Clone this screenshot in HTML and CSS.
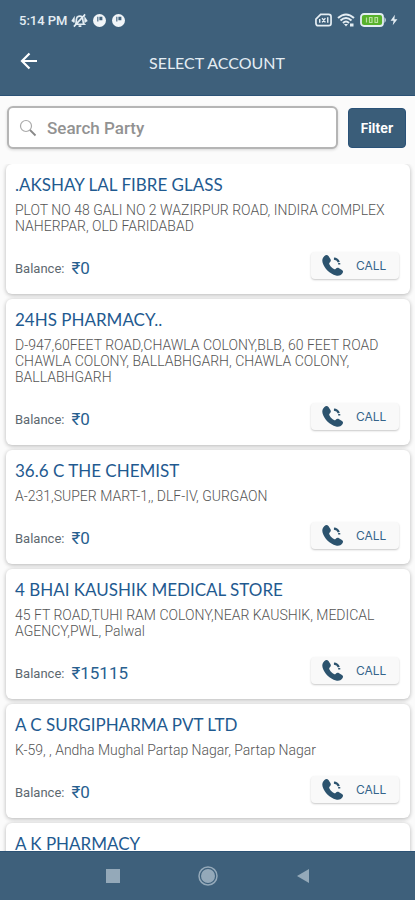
FILE: index.html
```html
<!DOCTYPE html>
<html lang="en">
<head>
<meta charset="utf-8">
<meta name="viewport" content="width=device-width, initial-scale=1">
<title>Select Account</title>
<link rel="stylesheet" href="styles.css">
</head>
<body>
<svg class="defs" aria-hidden="true">
  <symbol id="phone" viewBox="0 0 24 24">
    <path d="M3.600 2.200C5 .7 6.700.7 7.800 2.200L9.800 5.200C10.700 6.600 10.300 7.800 8.900 9.100C8.300 9.700 8.500 10.300 9 11.200C10.200 13.300 11.600 14.700 13.500 15.700C14.300 16.100 14.800 16 15.400 15.300C16.500 14.100 17.600 14 18.900 14.800L21.900 16.800C23.300 17.800 23.300 19.100 22.200 20.400C20.500 22.500 18.300 23.200 15.600 22.400C9 20.300 3.800 15.300 1.700 9C.9 6.300 1.500 4.200 3.600 2.200Z" fill="currentColor"/>
    <path d="M13.500 4.800C16 4.900 17.800 6.300 18.600 8.500M19 9.500V11" fill="none" stroke="currentColor" stroke-width="2.200"/>
  </symbol>
  <symbol id="dial" viewBox="0 0 14 14">
    <circle cx="7" cy="7" r="7" fill="#f1f5f8"/>
    <path d="M5.200 3V8M7.500 3.500H9.500V6H7.500Z" fill="#3e607b" stroke="#3e607b" stroke-width="1.200"/>
  </symbol>
</svg>
<header class="top">
  <div class="status">
    <span class="time">5:14 PM</span>
    <svg class="mute" viewBox="0 0 18 16" aria-hidden="true"><g fill="none" stroke="currentColor" stroke-width="1.800"><path d="M5 12C6 10 5 5 7 4C8.500 3 10.500 3 12 4.500C13 6 12 10 14 12ZM8 14H11M3 14.500L15 1.500M1 9L3 6V10M17 9L15 6V10"/></g></svg>
    <svg class="dial" aria-hidden="true"><use href="#dial"/></svg>
    <svg class="dial" aria-hidden="true"><use href="#dial"/></svg>
    <span class="spacer"></span>
    <svg class="sim" viewBox="0 0 18 14" aria-hidden="true"><path d="M6 1H14.500Q17 1 17 3.500V10.500Q17 13 14.500 13H3.500Q1 13 1 10.500V6Z" fill="none" stroke="currentColor" stroke-width="1.800"/><path d="M5 6V10M13.500 4V10M7.500 5L11 9.500M11 5L7.500 9.500" stroke="currentColor" stroke-width="1.500"/></svg>
    <svg class="wifi" viewBox="0 0 18 14" aria-hidden="true"><g fill="none" stroke="currentColor" stroke-width="2"><path d="M1 5Q9-2 17 5M3.500 7.500Q9 2.500 14.500 7.500M6 10Q9 7 12 10"/></g><path d="M7 11H11L9 13.500ZM13 10.500H16.500V13.500H13Z" fill="currentColor"/></svg>
    <svg class="battery" viewBox="0 0 27 14" aria-hidden="true"><rect x="1" y="1" width="22" height="12" rx="3" fill="#58b12c" stroke="currentColor" stroke-width="1.800"/><path d="M24.500 4Q27 7 24.500 10Z" fill="currentColor"/><path d="M6.500 4.500V9.500M9.500 4.500H12V9.500H9.500ZM15 4.500H17.500V9.500H15Z" fill="none" stroke="#b9e09f" stroke-width="1.200"/></svg>
    <svg class="bolt" viewBox="0 0 8 14" aria-hidden="true"><path d="M5 1L0 8H3.500L2.500 13L8 6H4.500Z" fill="currentColor"/></svg>
  </div>
  <div class="bar">
    <button class="back" type="button" aria-label="Back"><svg viewBox="0 0 18 18" aria-hidden="true"><path d="M9.500 1.500L2 9L9.500 16.500M2 9H17" fill="none" stroke="currentColor" stroke-width="2.200"/></svg></button>
    <h1>SELECT ACCOUNT</h1>
  </div>
</header>
<form class="search">
  <label class="field">
    <svg viewBox="0 0 18 18" aria-hidden="true"><circle cx="7" cy="7" r="5.500" fill="none" stroke="#aaa" stroke-width="1.200"/><path d="M11 11L16.500 16.500" stroke="#888" stroke-width="1.800"/></svg>
    <input type="text" placeholder="Search Party" aria-label="Search Party">
  </label>
  <button class="filter" type="button">Filter</button>
</form>
<main class="list">
  <article class="card">
    <h2>.AKSHAY LAL FIBRE GLASS</h2>
    <p>PLOT NO 48 GALI NO 2 WAZIRPUR ROAD, INDIRA COMPLEX<br>NAHERPAR, OLD FARIDABAD</p>
    <div class="foot"><span>Balance:</span><strong>₹0</strong><button class="call" type="button"><svg aria-hidden="true"><use href="#phone"/></svg>CALL</button></div>
  </article>
  <article class="card">
    <h2>24HS PHARMACY..</h2>
    <p>D-947,60FEET ROAD,CHAWLA COLONY,BLB, 60 FEET ROAD<br>CHAWLA COLONY, BALLABHGARH, CHAWLA COLONY,<br>BALLABHGARH</p>
    <div class="foot"><span>Balance:</span><strong>₹0</strong><button class="call" type="button"><svg aria-hidden="true"><use href="#phone"/></svg>CALL</button></div>
  </article>
  <article class="card">
    <h2>36.6 C THE CHEMIST</h2>
    <p>A-231,SUPER MART-1,, DLF-IV, GURGAON</p>
    <div class="foot"><span>Balance:</span><strong>₹0</strong><button class="call" type="button"><svg aria-hidden="true"><use href="#phone"/></svg>CALL</button></div>
  </article>
  <article class="card">
    <h2>4 BHAI KAUSHIK MEDICAL STORE</h2>
    <p>45 FT ROAD,TUHI RAM COLONY,NEAR KAUSHIK, MEDICAL<br>AGENCY,PWL, Palwal</p>
    <div class="foot"><span>Balance:</span><strong>₹15115</strong><button class="call" type="button"><svg aria-hidden="true"><use href="#phone"/></svg>CALL</button></div>
  </article>
  <article class="card">
    <h2>A C SURGIPHARMA PVT LTD</h2>
    <p>K-59, , Andha Mughal Partap Nagar, Partap Nagar</p>
    <div class="foot"><span>Balance:</span><strong>₹0</strong><button class="call" type="button"><svg aria-hidden="true"><use href="#phone"/></svg>CALL</button></div>
  </article>
  <article class="card">
    <h2>A K PHARMACY</h2>
  </article>
</main>
<nav class="nav">
  <button type="button" aria-label="Recent apps"><svg viewBox="0 0 20 20" aria-hidden="true"><rect x="3" y="3" width="14" height="14" fill="currentColor"/></svg></button>
  <button type="button" aria-label="Home"><svg viewBox="0 0 20 20" aria-hidden="true"><circle cx="10" cy="10" r="9" fill="none" stroke="currentColor" stroke-width="1.500"/><circle cx="10" cy="10" r="7" fill="currentColor"/></svg></button>
  <button type="button" aria-label="Back"><svg viewBox="0 0 20 20" aria-hidden="true"><path d="M16 3V17L4 10Z" fill="currentColor"/></svg></button>
</nav>
</body>
</html>
```
FILE: styles.css
```css
* { box-sizing: border-box; }
body {
  margin: 0;
  height: 100vh;
  display: flex;
  flex-direction: column;
  overflow: hidden;
  background: #fbfbfb;
  font-family: Roboto, "Liberation Sans", sans-serif;
}
button { border: 0; padding: 0; font: inherit; color: inherit; background: none; }
svg { display: block; flex: none; }
.defs { position: absolute; width: 0; height: 0; }

.top {
  flex: none;
  background: #3e607b;
  color: #e4edf3;
  border-bottom: 1px solid #2b5275;
}
.status {
  display: flex;
  align-items: center;
  height: 40px;
  padding: 0 17px 0 19px;
}
.time { font-size: 13px; font-weight: 500; margin-right: 3px; }
.mute { width: 17px; height: 15px; margin-right: 5px; }
.dial { width: 13px; height: 13px; margin-right: 6px; }
.spacer { flex: 1; }
.sim { width: 17px; height: 14px; margin-right: 5px; }
.wifi { width: 18px; height: 14px; margin-right: 5px; }
.battery { width: 27px; height: 14px; margin-right: 3px; }
.bolt { width: 8px; height: 12px; }

.bar {
  display: grid;
  grid-template-columns: 38px 1fr 19px;
  align-items: center;
  height: 55px;
  padding: 0 0 14px;
}
.back { justify-self: end; color: #fff; }
.back svg { width: 18px; height: 18px; }
.bar h1 {
  margin: 4px 0 0;
  text-align: center;
  font-family: Lato, sans-serif;
  font-size: 16px;
  font-weight: 400;
  line-height: 20px;
}

.search { flex: none; display: flex; gap: 10px; padding: 10px 9px 15px 7px; }
.field {
  flex: 1;
  display: flex;
  align-items: center;
  gap: 10px;
  height: 43px;
  padding: 0 10px;
  border: 2px solid #b5b5b5;
  border-radius: 6px;
  background: #fff;
  box-shadow: 0 1px 3px #00000026;
}
.field svg { width: 18px; height: 18px; }
.field input {
  flex: 1;
  min-width: 0;
  border: 0;
  padding: 0;
  outline: 0;
  background: none;
  font: 500 17px Roboto, sans-serif;
}
.field input::placeholder { color: #929292; opacity: 1; }
.filter {
  width: 58px;
  height: 40px;
  margin-top: 2px;
  border: 1px solid #2a5278;
  border-radius: 4px;
  background: #3a5d79;
  color: #fff;
  font: 700 13px Inter, sans-serif;
}

.list {
  flex: 1;
  min-height: 0;
  overflow: hidden;
  display: flex;
  flex-direction: column;
  gap: 5px;
  padding: 0 5px 0 6px;
}
.card {
  flex: none;
  padding: 11px 11px 9px 9px;
  border-radius: 6px;
  background: #fff;
  box-shadow: 0 1px 4px #00000048;
}
.card h2 {
  margin: 0 0 7px;
  font-family: Lato, sans-serif;
  font-size: 17px;
  font-weight: 400;
  line-height: 20px;
  color: #1f5a90;
}
.card p { margin: 0; font-size: 14px; font-weight: 300; line-height: 16px; color: #555; }
.foot { display: flex; align-items: center; height: 34px; margin-top: 17px; }
.foot span { font-size: 13px; color: #5d6870; margin-right: 7px; }
.foot strong { font-size: 17px; font-weight: 400; color: #28608f; }
.call {
  display: flex;
  align-items: center;
  gap: 12px;
  width: 88px;
  height: 27px;
  margin: 0 0 6px auto;
  padding-left: 10px;
  border-radius: 4px;
  background: #f9f9f9;
  box-shadow: 0 1px 2px #00000038;
  font: 12px Inter, sans-serif;
  color: #35648a;
}
.call svg { width: 23px; height: 23px; color: #2c536e; }

.nav {
  flex: none;
  display: flex;
  justify-content: center;
  gap: 75px;
  height: 49px;
  background: #3e607b;
  border-top: 1px solid #2b5275;
  color: #94a9b9;
}
.nav svg { width: 20px; height: 20px; }
```
